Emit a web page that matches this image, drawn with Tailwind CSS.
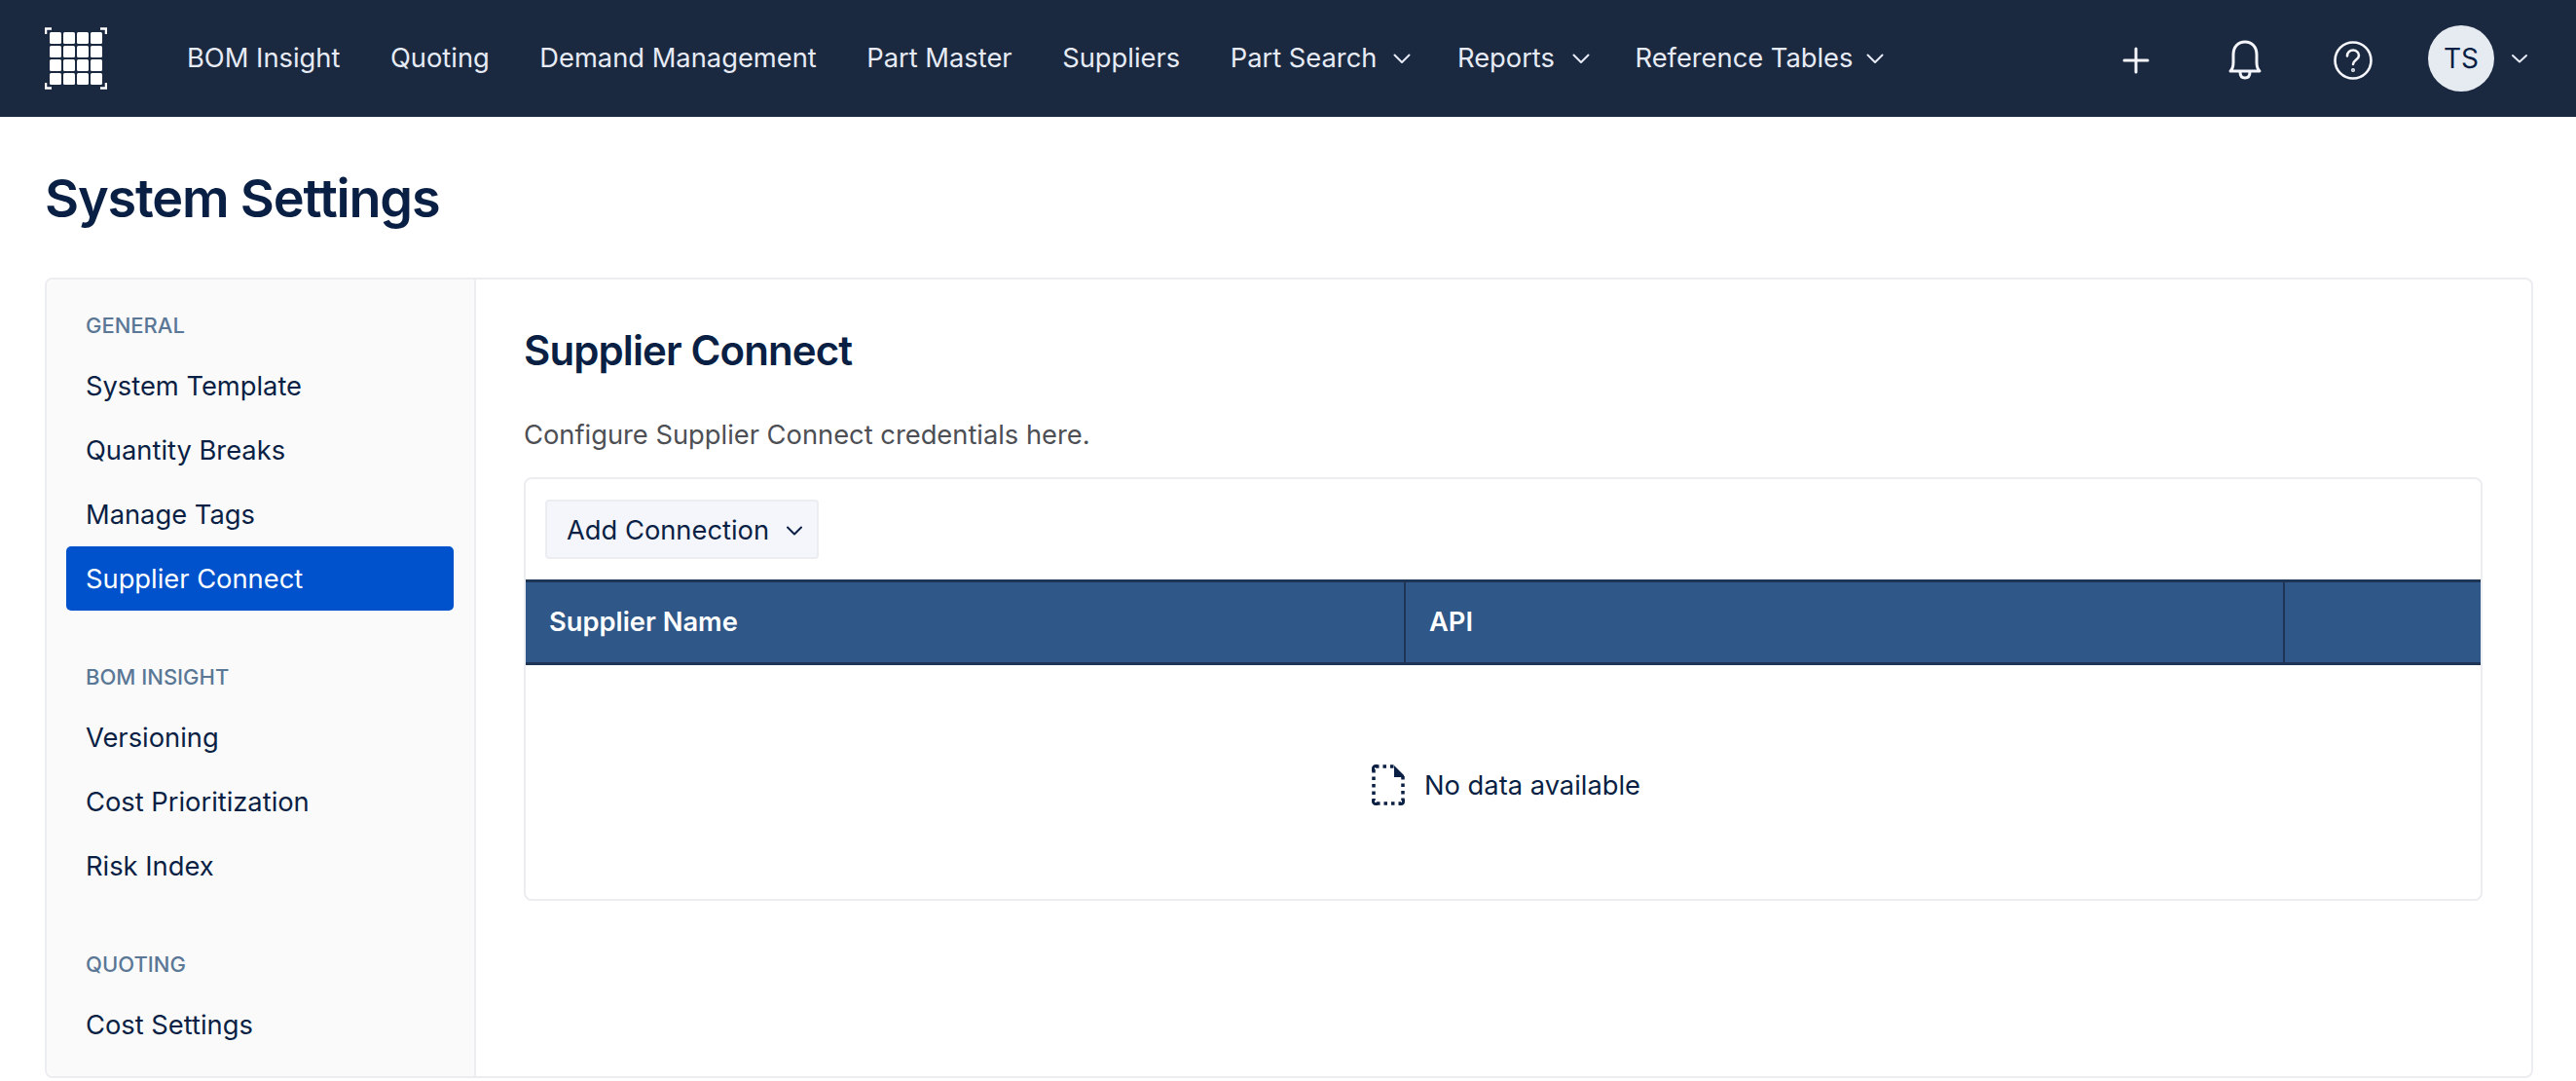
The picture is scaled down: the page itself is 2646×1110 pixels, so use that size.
<!DOCTYPE html>
<html lang="en">
<head>
  <meta charset="UTF-8" />
  <title>System Settings</title>
  <script src="https://cdn.jsdelivr.net/npm/@tailwindcss/browser@4"></script>
</head>
<body class="bg-white font-['Inter',sans-serif] h-[1110px] overflow-hidden text-[#0a1f44]">

  <!-- Top nav -->
  <header class="h-[120px] bg-[#1a2840] flex items-center pl-[46px] pr-[49px] text-[#e6ebf5]">
    <svg width="64" height="64" viewBox="0 0 64 64" class="shrink-0" fill="#fff">
      <g fill="none" stroke="#fff" stroke-width="2.5">
        <path d="M1 7V1.500H7M57 1.500H63V7M1 57V62.500H7M57 62.500H63V57" />
      </g>
      <rect x="5" y="5" width="12" height="12" rx="1.500" /><rect x="19" y="5" width="12" height="12" rx="1.500" /><rect x="33" y="5" width="12" height="12" rx="1.500" /><rect x="47" y="5" width="12" height="12" rx="1.500" />
      <rect x="5" y="19" width="12" height="12" rx="1.500" /><rect x="19" y="19" width="12" height="12" rx="1.500" /><rect x="33" y="19" width="12" height="12" rx="1.500" /><rect x="47" y="19" width="12" height="12" rx="1.500" />
      <rect x="5" y="33" width="12" height="12" rx="1.500" /><rect x="19" y="33" width="12" height="12" rx="1.500" /><rect x="33" y="33" width="12" height="12" rx="1.500" /><rect x="47" y="33" width="12" height="12" rx="1.500" />
      <rect x="5" y="47" width="12" height="12" rx="1.500" /><rect x="19" y="47" width="12" height="12" rx="1.500" /><rect x="33" y="47" width="12" height="12" rx="1.500" /><rect x="47" y="47" width="12" height="12" rx="1.500" />
    </svg>

    <nav class="ml-[82px] pb-[1px] flex items-center text-[27.3px] leading-[40px] gap-[51.6px] whitespace-nowrap">
      <a href="#">BOM Insight</a>
      <a href="#">Quoting</a>
      <a href="#">Demand Management</a>
      <a href="#">Part Master</a>
      <a href="#">Suppliers</a>
      <a href="#" class="flex items-center gap-[16px]">Part Search
        <svg width="20" height="20" viewBox="0 0 20 20" fill="none" stroke="currentColor" stroke-width="2" stroke-linecap="round" stroke-linejoin="round"><path d="M2.500 6.500L10 14l7.500-7.500" /></svg>
      </a>
      <a href="#" class="flex items-center gap-[17px] -ml-[5px]">Reports
        <svg width="20" height="20" viewBox="0 0 20 20" fill="none" stroke="currentColor" stroke-width="2" stroke-linecap="round" stroke-linejoin="round"><path d="M2.500 6.500L10 14l7.500-7.500" /></svg>
      </a>
      <a href="#" class="flex items-center gap-[13px] -ml-[6px]">Reference Tables
        <svg width="20" height="20" viewBox="0 0 20 20" fill="none" stroke="currentColor" stroke-width="2" stroke-linecap="round" stroke-linejoin="round"><path d="M2.500 6.500L10 14l7.500-7.500" /></svg>
      </a>
    </nav>

    <div class="ml-auto flex items-center text-white">
      <svg width="32" height="32" viewBox="0 0 32 32" fill="none" stroke="#f4f6fb" stroke-width="3" stroke-linecap="round" class="mt-[4px]"><path d="M16 4v24M4 16h24" /></svg>
      <svg width="40" height="44" viewBox="0 0 40 44" fill="none" stroke="#f4f6fb" stroke-width="3" stroke-linecap="round" stroke-linejoin="round" class="ml-[76px] mt-[4px]">
        <path d="M5 33c2-2 3-4 3-9v-8C8 8 13 3 20 3s12 5 12 13v8c0 5 1 7 3 9z" />
        <path d="M15 34c0 4 2 6 5 6s5-2 5-6" />
      </svg>
      <svg width="40" height="40" viewBox="0 0 40 40" fill="none" stroke="#f4f6fb" stroke-width="2.600" stroke-linecap="round" stroke-linejoin="round" class="ml-[71px] mt-[4px]">
        <circle cx="20" cy="20" r="18.500" />
        <path d="M14 15.500c0-3.500 2.700-6 6-6s6 2.500 6 5.500c0 4.500-6 4.500-6 9" />
        <circle cx="20" cy="30" r="0.700" />
      </svg>
      <div class="ml-[57px] w-[68px] h-[68px] rounded-full bg-[#e6ebf2] text-[#0a1f44] flex items-center justify-center text-[28px]">TS</div>
      <svg width="18" height="18" viewBox="0 0 18 18" fill="none" stroke="#e6ebf5" stroke-width="2" stroke-linecap="round" stroke-linejoin="round" class="ml-[17px]"><path d="M2 6l7 6.500L16 6" /></svg>
    </div>
  </header>

  <main class="pl-[46px] pr-[44px]">
    <h1 class="h-[165px] flex items-center pt-[2px] text-[54px] font-semibold tracking-[-1.2px]">System Settings</h1>

    <div class="h-[822px] border-2 border-[#ebedf1] rounded-[8px] flex overflow-hidden">
      <!-- Settings sidebar -->
      <aside class="w-[441px] shrink-0 bg-[#fafafb] border-r-2 border-[#ebedf1] px-[20px] pt-[29px] text-[27.3px] leading-[68px]">
        <p class="px-[20px] text-[22px] leading-[36px] font-medium text-[#5a7896] mb-[11px]">GENERAL</p>
        <a href="#" class="block px-[20px] h-[66px]">System Template</a>
        <a href="#" class="block px-[20px] h-[66px]">Quantity Breaks</a>
        <a href="#" class="block px-[20px] h-[66px]">Manage Tags</a>
        <a href="#" class="block px-[20px] h-[66px] w-[398px] bg-[#0052cc] text-white rounded-[5px]">Supplier Connect</a>

        <p class="px-[20px] text-[22px] leading-[36px] font-medium text-[#5a7896] mt-[50px] mb-[11px]">BOM INSIGHT</p>
        <a href="#" class="block px-[20px] h-[66px]">Versioning</a>
        <a href="#" class="block px-[20px] h-[66px]">Cost Prioritization</a>
        <a href="#" class="block px-[20px] h-[66px]">Risk Index</a>

        <p class="px-[20px] text-[22px] leading-[36px] font-medium text-[#5a7896] mt-[50px] mb-[11px]">QUOTING</p>
        <a href="#" class="block px-[20px] h-[66px]">Cost Settings</a>
      </aside>

      <!-- Content -->
      <section class="flex-1 pl-[49px] pr-[50px]">
        <h2 class="mt-[45px] text-[42px] leading-[56px] font-semibold tracking-[-0.9px]">Supplier Connect</h2>
        <p class="mt-[39px] text-[27.3px] leading-[40px] text-[#4d4f55]">Configure Supplier Connect credentials here.</p>

        <div class="mt-[23px] border-2 border-[#ebedf1] rounded-[8px] overflow-hidden">
          <div class="h-[103px] pl-[20px] pt-[21px]">
            <button class="h-[61px] w-[281px] bg-[#f5f6fb] border-2 border-[#ebedf1] rounded-[4px] flex items-center pl-[20px] pt-[3px] text-[27.3px]">
              Add Connection
              <svg width="18" height="18" viewBox="0 0 18 18" fill="none" stroke="currentColor" stroke-width="2" stroke-linecap="round" stroke-linejoin="round" class="ml-[17px]"><path d="M2 5.500l7 7 7-7" /></svg>
            </button>
          </div>
          <div class="h-[88px] bg-[#2f5788] border-y-[3px] border-[#1f3556] flex text-white text-[27.3px] font-semibold">
            <div class="w-[904px] border-r-2 border-[#1f3556] pl-[24px] flex items-center">Supplier Name</div>
            <div class="w-[903px] border-r-2 border-[#1f3556] pl-[24px] flex items-center">API</div>
            <div class="flex-1"></div>
          </div>
          <div class="h-[240px] flex items-center justify-center gap-[20px] pt-[9px] pl-[6px] text-[27.3px]">
            <svg width="34" height="42" viewBox="0 0 34 42" fill="none" class="shrink-0 -mt-[3px]">
              <path d="M4 2H24M2 5V37M32 12V37M5 40H30" stroke="#0a1f44" stroke-width="3.500" stroke-dasharray="3.500 4" />
              <path d="M23 1l10 10v2H23z" fill="#0a1f44" />
              <path d="M1.500 36v2a2.500 2.500 0 0 0 2.500 2.500h2M28 40.500h2a2.500 2.500 0 0 0 2.500-2.500v-2M1.500 7V4A2.500 2.500 0 0 1 4 1.500h2" stroke="#0a1f44" stroke-width="3" />
            </svg>
            <span>No data available</span>
          </div>
        </div>
      </section>
    </div>
  </main>
</body>
</html>
